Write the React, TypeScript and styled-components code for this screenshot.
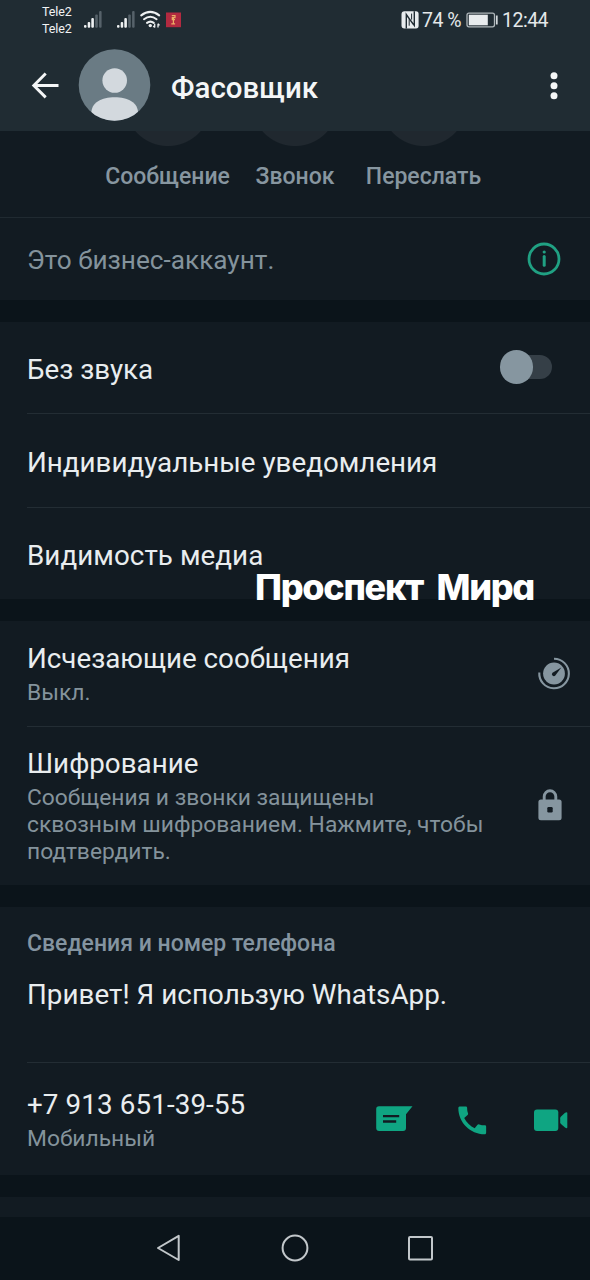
import React from 'react';
import styled, { createGlobalStyle } from 'styled-components';

const GlobalStyle = createGlobalStyle`
  * { box-sizing: border-box; }
  body { margin: 0; background: #0b141a; font-family: Roboto, sans-serif; }
`;

const Screen = styled.div`
  position: relative;
  display: flex;
  flex-direction: column;
  width: 590px;
  height: 1280px;
  overflow: hidden;
  background: #0b141a;
`;

const TopBar = styled.header`
  flex: none;
  height: 131px;
  background: #202c33;
`;

const StatusBar = styled.div`
  display: flex;
  height: 40px;
  padding: 3px 42px 0 42px;
  color: #e4e8ea;
`;

const Carriers = styled.div`
  width: 41px;
  font-size: 12.5px;
  line-height: 17px;
  letter-spacing: -0.1px;
  color: #f1f3f4;
`;

const StatusIcons = styled.svg`
  display: block;
  flex: none;
`;

const StatusRight = styled.div`
  display: flex;
  align-items: center;
  height: 34px;
  margin-left: auto;
  font-size: 19.5px;
`;

const Percent = styled.span`
  width: 44px;
  white-space: nowrap;
  letter-spacing: -0.5px;
`;

const Clock = styled.span`
  width: 46px;
  letter-spacing: -0.5px;
`;

const TitleRow = styled.div`
  display: flex;
  align-items: center;
  height: 92px;
  padding: 0 29px;
`;

const Title = styled.h1`
  flex: 1;
  margin: 4px 0 0 20px;
  font-size: 29.5px;
  line-height: 34px;
  font-weight: 500;
  color: #f4f6f7;
`;

const Icon = styled.svg`
  display: block;
  flex: none;
`;

const AvatarIcon = styled(Icon)`
  margin: -2px 0 0 18px;
`;

const LockIcon = styled(Icon)`
  margin-top: -2px;
`;

const PhoneIcon = styled(Icon)`
  margin: 2px 2px 0 -1px;
`;

const VideoIcon = styled(Icon)`
  margin-top: 2px;
`;

const Panel = styled.section`
  flex: none;
  margin-bottom: 22px;
  background: #121b22;
`;

const PanelEdge = styled.div`
  flex: none;
  height: 20px;
  background: #121b22;
`;

const Actions = styled.div`
  display: flex;
  height: 87px;
  padding-left: 104px;
  border-bottom: 1px solid #202a31;
`;

const Action = styled.div<{ $width: number }>`
  display: flex;
  flex-direction: column;
  align-items: center;
  width: ${(p) => p.$width}px;
  font-size: 23px;
  line-height: 28px;
  font-weight: 500;
  color: #8796a0;
  white-space: nowrap;
`;

const Disc = styled.div`
  flex: none;
  width: 86px;
  height: 15px;
  margin-bottom: 17px;
  background: radial-gradient(circle 43px at 43px -28px, #20282f 42.5px, transparent 43.5px);
`;

const Row = styled.div<{ $height: number; $right?: number }>`
  display: flex;
  align-items: center;
  height: ${(p) => p.$height}px;
  margin-left: 27px;
  padding-right: ${(p) => p.$right ?? 0}px;
  & + & { border-top: 1px solid #232d34; }
`;

const Copy = styled.div<{ $top: number }>`
  flex: 1;
  align-self: flex-start;
  padding-top: ${(p) => p.$top}px;
  white-space: nowrap;
`;

const Label = styled.div<{ $spacing?: number }>`
  font-size: 27.75px;
  line-height: 32px;
  letter-spacing: ${(p) => p.$spacing ?? 0}px;
  color: #e9edef;
`;

const Note = styled.div`
  margin-top: 4px;
  font-size: 22.8px;
  line-height: 27px;
  color: #84939c;
`;

const Business = styled.div`
  font-size: 26.2px;
  line-height: 32px;
  color: #84939c;
`;

const Heading = styled.div`
  margin-bottom: 21px;
  font-size: 23px;
  line-height: 28px;
  font-weight: 500;
  color: #8494a0;
`;

const Toggle = styled.div`
  display: flex;
  align-items: center;
  width: 45px;
  height: 24px;
  margin-top: -1px;
  border-radius: 12px;
  background: #353f47;
`;

const Knob = styled.div`
  flex: none;
  width: 33.5px;
  height: 33.5px;
  margin-left: -7.5px;
  border-radius: 50%;
  background: #8696a0;
`;

const Contact = styled.div`
  display: flex;
  align-items: center;
  gap: 42px;
`;

const Watermark = styled.div`
  position: absolute;
  left: 255px;
  top: 565px;
  font-family: Inter, sans-serif;
  font-size: 36px;
  line-height: 44px;
  font-weight: 800;
  font-feature-settings: "cv11";
  letter-spacing: -1.3px;
  word-spacing: 7px;
  color: #fff;
  white-space: nowrap;
`;

const NavBar = styled.nav`
  display: flex;
  align-items: center;
  justify-content: space-between;
  flex: none;
  height: 63px;
  padding: 0 156px 1px;
  background: #0b141a;
`;

const Signals = () => (
  <StatusIcons width="100" height="36" viewBox="83 3 100 36">
    {[0, 33].map((x) => (
      <g key={x} transform={`translate(${x} 0)`} fill="#eef1f2">
        <rect x="84" y="25" width="2.5" height="2.7" rx="1" />
        <rect x="87.7" y="22" width="2.5" height="5.7" rx="1" />
        <rect x="91.3" y="18" width="2.6" height="9.7" rx="1" />
        <rect x="95.2" y="14.5" width="2.6" height="13.2" rx="1" fill="#56626a" />
        <rect x="99.1" y="11" width="2.5" height="16.7" rx="1" fill="#56626a" />
      </g>
    ))}
    <g fill="none" stroke="#eef1f2" strokeWidth="2" strokeLinecap="round">
      <path d="M141.2 15.4q9.2-7 18 0" />
      <path d="M144 19.2q6.3-5 12.6 0" />
      <path d="M147 22.9q3.4-2.6 6.8 0" />
    </g>
    <circle cx="150.3" cy="25.6" r="1.7" fill="#eef1f2" />
    <path d="M154.7 23.7v3.7M153.2 25.9l1.5 1.6M158 27.5v-3.8M158 23.7l1.5 1.7" stroke="#eef1f2" strokeWidth="1.3" fill="none" />
    <rect x="166" y="12.5" width="15" height="14.7" fill="#b22a40" />
    <path d="M171.8 15.6h3.2v2h-2.7v2h2.7M173.4 17v7M171.3 23.9h3.8" fill="none" stroke="#ecae65" strokeWidth="1.2" />
  </StatusIcons>
);

const Nfc = () => (
  <StatusIcons width="21" height="34" viewBox="401 3 21 34">
    <path d="M404.5 11.2h11.5a2.6 2.6 0 0 1 2.6 2.6v12a2.6 2.6 0 0 1-2.6 2.6h-11.5a3 3 0 0 1-3-3V14.2a3 3 0 0 1 3-3z" fill="#e8ecee" />
    <path d="M406.3 28.4V14.5l7 9.8M414.3 11.2v14.2l-7.2-9.6" fill="none" stroke="#202c33" strokeWidth="1.4" />
    <path d="M409.2 19.2v6.5M411.6 13.6v6" fill="none" stroke="#202c33" strokeWidth="1" />
  </StatusIcons>
);

const Battery = () => (
  <StatusIcons width="36" height="34" viewBox="465 3 36 34">
    <rect x="466" y="13.2" width="27.5" height="13.6" rx="2" fill="none" stroke="#aeb6ba" strokeWidth="1.3" />
    <rect x="467.8" y="14.7" width="19" height="10.6" fill="#e8ecee" />
    <path d="M495.8 15.5v9" stroke="#d3d8db" strokeWidth="1.7" />
  </StatusIcons>
);

const Back = () => (
  <Icon width="30" height="30" viewBox="29 71 30 30">
    <path d="M58.5 85.5H34M45.7 73.5L33.8 85.5L45.7 97.4" fill="none" stroke="#f4f6f7" strokeWidth="2.9" />
  </Icon>
);

const Avatar = () => (
  <AvatarIcon width="74" height="74" viewBox="0 0 74 74">
    <defs>
      <clipPath id="avatar"><circle cx="37.5" cy="37" r="35.8" /></clipPath>
    </defs>
    <g clipPath="url(#avatar)">
      <rect width="74" height="74" fill="#6a7b84" />
      <circle cx="37.7" cy="32.5" r="12.3" fill="#d3d9de" />
      <path d="M14.2 66C14.2 54 24.7 49.2 37.7 49.2S61.2 54 61.2 66v8h-47z" fill="#d3d9de" />
    </g>
  </AvatarIcon>
);

const More = () => (
  <Icon width="14" height="30" viewBox="547 71 14 30">
    {[75.8, 85.7, 95.8].map((y) => <circle key={y} cx="554" cy={y} r="3.5" fill="#f4f6f7" />)}
  </Icon>
);

const Info = () => (
  <Icon width="36" height="36" viewBox="0 0 36 36">
    <circle cx="18" cy="18" r="15" fill="none" stroke="#20a183" strokeWidth="2.8" />
    <path d="M18.2 15.5v8.8" stroke="#20a183" strokeWidth="3" strokeLinecap="round" />
    <circle cx="18.2" cy="11" r="1.6" fill="#20a183" />
  </Icon>
);

const Timer = () => (
  <Icon width="34" height="34" viewBox="0 0.5 34 34">
    <path d="M17 2.2A14.8 14.8 0 1 1 2.3 16" fill="none" stroke="#8696a0" strokeWidth="2.1" />
    <circle cx="17" cy="17" r="10.9" fill="#8696a0" />
    <path d="M24.3 11L18.3 19a1.9 1.9 0 0 1-2.8-2.8z" fill="#121b22" />
  </Icon>
);

const Lock = () => (
  <LockIcon width="24" height="32" viewBox="0 0 24 32">
    <path d="M6.2 12V7.5a5.8 5.8 0 0 1 11.6 0V12" fill="none" stroke="#8696a0" strokeWidth="2.9" />
    <rect x="0.4" y="10.6" width="23.2" height="20.6" rx="2.5" fill="#8696a0" />
    <rect x="9.3" y="18" width="5.4" height="5.4" rx="1.2" fill="#121b22" />
  </LockIcon>
);

const Chat = () => (
  <Icon width="37" height="30" viewBox="0 0 37 30">
    <path d="M3 2.2H36.5L30 10.2V24a3 3 0 0 1-3 3H3.2a3 3 0 0 1-3-3V5a2.8 2.8 0 0 1 2.8-2.8z" fill="#0fa582" />
    <path d="M7 12.2H23.2M7 17.5H20.2" stroke="#121b22" strokeWidth="2.3" />
  </Icon>
);

const Phone = () => (
  <PhoneIcon width="36" height="36" viewBox="0 0 24 24">
    <path transform="translate(-.2 -.1) scale(1.03)" d="M20.2 15.2c-1.3 0-2.6-.2-3.7-.6-.4-.1-.8 0-1.1.3l-1.8 2.2c-2.8-1.4-5.3-3.8-6.8-6.7l2.2-1.9c.3-.3.4-.7.3-1.1-.5-1.1-.6-2.4-.6-3.6C8.7 3.3 8.2 3 7.7 3H4.3C3.7 3 3 3.3 3 4c0 9.4 7.7 17 17 17 .7 0 1-.6 1-1.2v-3.7c0-.5-.3-.9-.8-.9z" fill="#0fa582" />
  </PhoneIcon>
);

const Video = () => (
  <VideoIcon width="34" height="24" viewBox="0 0 34 24">
    <rect x="0" y="1.4" width="24.3" height="21.6" rx="3" fill="#0fa582" />
    <path d="M26.2 10.2q0-1 .8-1.8l4-3.6q2.3-1.4 2.3.3v14.2q0 1.7-2.3.3l-4-3.6q-.8-.8-.8-1.8z" fill="#0fa582" />
  </VideoIcon>
);

export default function App() {
  return (
    <Screen>
      <GlobalStyle />
      <TopBar>
        <StatusBar>
          <Carriers>Tele2<br />Tele2</Carriers>
          <Signals />
          <StatusRight>
            <Nfc />
            <Percent>74 %</Percent>
            <Battery />
            <Clock>12:44</Clock>
          </StatusRight>
        </StatusBar>
        <TitleRow>
          <Back />
          <Avatar />
          <Title>Фасовщик</Title>
          <More />
        </TitleRow>
      </TopBar>
      <Panel>
        <Actions>
          <Action $width={127}><Disc />Сообщение</Action>
          <Action $width={128}><Disc />Звонок</Action>
          <Action $width={129}><Disc />Переслать</Action>
        </Actions>
        <Row $height={82} $right={28}>
          <Copy $top={26}><Business>Это бизнес-аккаунт.</Business></Copy>
          <Info />
        </Row>
      </Panel>
      <Panel>
        <Row $height={91} $right={38}>
          <Copy $top={32}><Label>Без звука</Label></Copy>
          <Toggle><Knob /></Toggle>
        </Row>
        <Row $height={94}><Copy $top={33}><Label>Индивидуальные уведомления</Label></Copy></Row>
        <Row $height={92}><Copy $top={32}><Label $spacing={0.06}>Видимость медиа</Label></Copy></Row>
      </Panel>
      <Panel>
        <Row $height={105} $right={19}>
          <Copy $top={22}>
            <Label>Исчезающие сообщения</Label>
            <Note>Выкл.</Note>
          </Copy>
          <Timer />
        </Row>
        <Row $height={159} $right={28}>
          <Copy $top={21}>
            <Label>Шифрование</Label>
            <Note>Сообщения и звонки защищены<br />сквозным шифрованием. Нажмите, чтобы<br />подтвердить.</Note>
          </Copy>
          <Lock />
        </Row>
      </Panel>
      <Panel>
        <Row $height={155}>
          <Copy $top={23}>
            <Heading>Сведения и номер телефона</Heading>
            <Label $spacing={0.05}>Привет! Я использую WhatsApp.</Label>
          </Copy>
        </Row>
        <Row $height={113} $right={22}>
          <Copy $top={26}>
            <Label $spacing={0.12}>+7 913 651-39-55</Label>
            <Note>Мобильный</Note>
          </Copy>
          <Contact><Chat /><Phone /><Video /></Contact>
        </Row>
      </Panel>
      <PanelEdge />
      <NavBar>
        <Icon width="26" height="30" viewBox="0 0 26 30">
          <path d="M22.7 2.8V27L2 15z" fill="none" stroke="#c2c7ca" strokeWidth="2" strokeLinejoin="round" />
        </Icon>
        <Icon width="30" height="28" viewBox="0 0 30 28"><circle cx="16" cy="14" r="12.4" fill="none" stroke="#c2c7ca" strokeWidth="2" /></Icon>
        <Icon width="28" height="28" viewBox="0 0 28 28"><rect x="3" y="3" width="23" height="22.5" rx="1" fill="none" stroke="#c2c7ca" strokeWidth="2" /></Icon>
      </NavBar>
      <Watermark>Проспект Мира</Watermark>
    </Screen>
  );
}
